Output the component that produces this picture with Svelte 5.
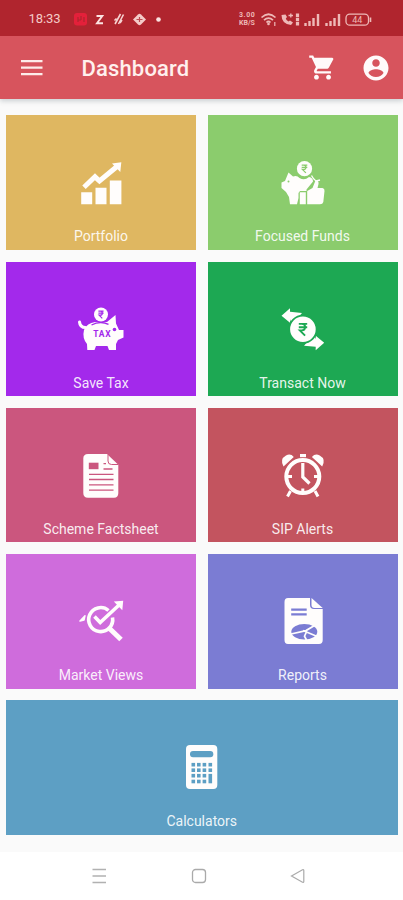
<script>
  const tiles = [
    { id: 'portfolio', label: 'Portfolio', color: '#dfb761' },
    { id: 'funds', label: 'Focused Funds', color: '#8bcc6d' },
    { id: 'tax', label: 'Save Tax', color: '#a329eb' },
    { id: 'transact', label: 'Transact Now', color: '#1da853' },
    { id: 'factsheet', label: 'Scheme Factsheet', color: '#cb567e' },
    { id: 'alerts', label: 'SIP Alerts', color: '#c3545f' },
    { id: 'market', label: 'Market Views', color: '#cf6cdc' },
    { id: 'reports', label: 'Reports', color: '#7b7cd3' },
    { id: 'calculators', label: 'Calculators', color: '#5d9fc4' }
  ];
  const keyRows = [19.7, 25.2, 30.7, 36.5];
  const keyCols = [16.3, 21.8, 27.4, 33.3];
</script>

{#snippet rupee(x, y, s)}
  <g transform="translate({x} {y}) scale({s})" fill="none" stroke="var(--tile)" stroke-width="1.8">
    <path d="M-4-5.2H4M-4-2H4M-3-5.2H-1C3-5.2 3 1 -1 1H-3L2 6" />
  </g>
{/snippet}

<div class="screen">
  <header>
    <div class="status">
      <span class="time">18:33</span>
      <svg class="notes" width="92" height="16" viewBox="0 0 92 16">
        <rect x="1" y="2" width="13" height="12.5" rx="3" fill="#e4203a" />
        <path d="M5 6v5M8 5v4M11 6v5M5 9h3" stroke="#b0252e" stroke-width="1.2" fill="none" />
        <path d="M23.500 5h5.800l-5.300 7.200h6" fill="none" stroke="#fbe3e1" stroke-width="1.900" />
        <path d="M42 13l5.500-10M45.500 13l5-9.500M41.500 9.500l2-2M47 12l2-3" stroke="#f6d3d1" stroke-width="1.600" fill="none" />
        <path d="M60 8.500L65 3.500Q66.500 2 68 3.500L73 8.500L68 13.500Q66.500 15 65 13.500Z" fill="#f4cbc8" />
        <path d="M63.500 8.500h6M66.500 6v5" stroke="#bd4a50" stroke-width="1.200" />
        <circle cx="85.500" cy="8.500" r="2.300" fill="#fbe3e1" />
      </svg>
      <span class="speed"><b>3.00</b><b>KB/S</b></span>
      <svg class="signals" width="115" height="16" viewBox="0 0 115 16" fill="none" stroke="#eeb9b7">
        <path d="M.500 6.500Q7.500 0 14.500 6.500M3 9.200Q7.500 5.200 12 9.200M5.500 11.500Q7.500 9.500 9.500 11.500" stroke-width="1.700" />
        <circle cx="7.500" cy="13" r="1.300" fill="#eeb9b7" stroke="none" />
        <path d="M13.800 11v4" stroke-width="1.200" />
        <path d="M20.500 4Q20.500 13 30 14L32 11.500L29 9.500L27.500 10.500Q25 9 24.800 7.500L26 6L24.500 3.500Z" fill="#eeb9b7" stroke="none" />
        <path d="M27.500 4.500h4.500M29.800 2.500v4" stroke-width="1.400" />
        <path d="M36.500 2.500v12.500" stroke-width="3.200" stroke-dasharray="3.500 .800" />
        <path d="M44.500 15v-3M48.500 15v-5M52.500 15V7M57 15V3M65.500 15v-3M69.500 15v-5M73.500 15V7M78 15V3" stroke-width="2.400" />
        <rect x="85" y="3.200" width="22.500" height="11" rx="3.800" stroke-width="1.300" />
        <path d="M109.500 6.500v4.500" stroke-width="1.600" />
        <text x="96.200" y="12" text-anchor="middle" font-size="9" fill="#eeb9b7" stroke="none">44</text>
      </svg>
    </div>
    <div class="bar">
      <svg class="menu" width="22" height="16" viewBox="0 0 22 16">
        <path d="M0 1.200h21.500M0 7.700h21.500M0 14.200h21.500" stroke="#fdecea" stroke-width="2.300" />
      </svg>
      <h1>Dashboard</h1>
      <svg class="cart" width="29" height="29" viewBox="0 0 24 24" fill="#fffafa">
        <path d="M7 18c-1.100 0-1.990.900-1.990 2S5.900 22 7 22s2-.900 2-2-.900-2-2-2zM1 2v2h2l3.600 7.590-1.350 2.450c-.160.280-.250.610-.250.960 0 1.100.900 2 2 2h12v-2H7.420c-.140 0-.250-.110-.250-.250l.030-.120.900-1.630h7.450c.750 0 1.410-.410 1.750-1.030l3.580-6.490A1 1 0 0 0 20 4H5.210l-.940-2H1zm16 16c-1.100 0-1.990.900-1.990 2s.890 2 1.990 2 2-.900 2-2-.900-2-2-2z" />
      </svg>
      <svg class="user" width="30" height="30" viewBox="0 0 24 24" fill="#fffafa">
        <path d="M12 2C6.480 2 2 6.480 2 12s4.480 10 10 10 10-4.480 10-10S17.520 2 12 2zm0 3c1.660 0 3 1.340 3 3s-1.340 3-3 3-3-1.340-3-3 1.340-3 3-3zm0 14.200c-2.500 0-4.710-1.280-6-3.220.030-1.990 4-3.080 6-3.080 1.990 0 5.970 1.090 6 3.080-1.290 1.940-3.500 3.220-6 3.220z" />
      </svg>
    </div>
  </header>

  <main>
    {#each tiles as t (t.id)}
      <div class="tile" class:wide={t.id === 'calculators'} style="--tile:{t.color}">
        <svg class="icon" width="50" height="50" viewBox="0 0 50 50" fill="#fffdfc">
          {#if t.id === 'portfolio'}
            <path d="M5.200 32.300h11v12H5.200zM19.500 27.700h11v16.600h-11zM33.800 20.500h11.600v23.800H33.800z" />
            <path d="M8 27.200L19 16.800L23.500 21L41 6.500" fill="none" stroke="#fffdfc" stroke-width="5" />
            <path d="M45.300 2.200L36 3.500L44.300 12Z" />
          {:else if t.id === 'funds'}
            <circle cx="26.500" cy="8.700" r="7.600" />
            {@render rupee(26.5, 8.7, 0.7)}
            <path d="M10.500 12.500L15 16.500Q19 15 21.500 18Q26.500 21 31 17Q35 17.500 35 21.500L28.500 29.500V31H22L20.500 33V38L19 44.300H12L11 37L8 32L3.500 28V22.500L7 21Z" />
            <path d="M33.500 15.500Q35.500 19.500 38 21L42 20" fill="none" stroke="#fffdfc" stroke-width="1.300" />
            <circle cx="10.500" cy="21.500" r="1" fill="var(--tile)" />
            <path d="M21.800 32.300h6v12h-6zM29.200 31L34.500 28L37.500 20.500Q41 20 40.500 24L39.500 28H44.500Q46.800 28.500 46.500 31L45.300 42Q44.800 44.300 42 44.300H29.200Z" />
          {:else if t.id === 'tax'}
            <path d="M3.500 15Q4 20.500 9.500 20.500" fill="none" stroke="#fffdfc" stroke-width="3" stroke-linecap="round" />
            <path d="M8 23Q11 16 19 15H31L39.500 8L40 16.500L43 23H47.500V30.500L42 33L40 37V42.900H33L31.500 39H20L18.500 42.900H11.300L11 37Q6 31 8 23Z" />
            <path d="M15.500 18Q24 13.500 32.500 17.300" fill="none" stroke="var(--tile)" stroke-width="1.400" />
            <circle cx="25" cy="7.500" r="7" />
            {@render rupee(25, 7.5, 0.65)}
            <circle cx="38.500" cy="22.500" r="1.800" fill="var(--tile)" />
            <text x="26" y="30" text-anchor="middle" font-size="8.500" font-weight="700" textLength="17.500" fill="var(--tile)">TAX</text>
          {:else if t.id === 'transact'}
            <path d="M3.500 8.700L12 1.300V4.800L24 6L14 17.500L12 12.300V15.700ZM46.200 35.800L37.700 43.200V39.700L26 38.800L36 27.500L37.700 32.200V28.800Z" />
            <circle cx="24.900" cy="22.300" r="13.700" stroke="var(--tile)" stroke-width="1.800" />
            {@render rupee(25, 22.3, 1.05)}
          {:else if t.id === 'factsheet'}
            <path d="M12 1H31L42.300 11.800V40Q42.300 44.700 38 44.700H12Q7.300 44.700 7.300 40V5.500Q7.300 1 12 1Z" />
            <path d="M32 1.500V8Q32 11.500 35.500 11.500H42" fill="none" stroke="var(--tile)" stroke-width="1" />
            <path d="M12.800 9.700h9.700v6.500h-9.700z" fill="var(--tile)" />
            <path d="M27.500 10.700h2.500M27.500 16h9M13 21.300h24.500M13 26.500h24.500M13 31.800h24.500M13 37.200h24.500" stroke="var(--tile)" stroke-width="1.300" />
          {:else if t.id === 'alerts'}
            <path d="M12.500 38L9.500 43.500M37 38L40 43.500" stroke="#fffdfc" stroke-width="3" />
            <circle cx="24.800" cy="23.600" r="16.500" fill="none" stroke="#fffdfc" stroke-width="4" />
            <path d="M5.500 13.500Q1.500 6 8 2.500Q12.500 0 15.800 4ZM44.200 13.500Q48.200 6 41.700 2.500Q37.200 0 33.900 4Z" />
            <path d="M22 1h6v3.200h-6z" />
            <path d="M24.800 10V24L31.500 30.500" fill="none" stroke="#fffdfc" stroke-width="3.200" />
            <path d="M10 23.600h4M36 23.600h4M24.800 35.500v3" stroke="#fffdfc" stroke-width="3" />
          {:else if t.id === 'market'}
            <path d="M4 22L9 16.700L8 21Z" stroke="#fffdfc" stroke-width="1.500" stroke-linejoin="round" />
            <path d="M32.500 11.500A12 12 0 1 0 36.500 18.500" fill="none" stroke="#fffdfc" stroke-width="3.600" />
            <path d="M33 29L45 40.500" stroke="#fffdfc" stroke-width="5" />
            <path d="M18.500 17.500L24.200 23.500L42.500 6.500" fill="none" stroke="#fffdfc" stroke-width="3.600" />
            <path d="M47.200 1.700L37.800 2.500L46.300 11.200Z" />
          {:else if t.id === 'reports'}
            <path d="M10-1H32V6Q32 10 36 10H44.700V41Q44.700 45 41 45H10Q6.500 45 6.500 41V3Q6.500-1 10-1Z" />
            <path d="M33.500-1L44.700 9H36.500Q33.500 9 33.500 6Z" />
            <path d="M13.200 10.600h15.500M13.200 15.300h15.500" stroke="var(--tile)" stroke-width="2.200" />
            <ellipse cx="26.300" cy="32.700" rx="13" ry="7.700" fill="var(--tile)" />
            <path d="M13 35L28 31.600L36.500 26.500M25 31.500L38 37M28.200 33.500L26.500 37.200L28.500 41" stroke="#fffdfc" stroke-width="1.700" fill="none" />
          {:else}
            <rect x="9" y="0" width="31.300" height="44" rx="4" />
            <rect x="13" y="6" width="23.300" height="6.300" rx="3" fill="var(--tile)" />
            {#each keyRows as y, r}
              {#each keyCols as x, c}
                {#if !(r === 3 && c === 3)}
                  <rect x={x - 1.8} y={y - 1.8} width="3.600" height={r === 2 && c === 3 ? 9.4 : 3.6} fill="var(--tile)" />
                {/if}
              {/each}
            {/each}
          {/if}
        </svg>
        <span class="label">{t.label}</span>
      </div>
    {/each}
  </main>

  <nav>
    <svg width="14" height="16" viewBox="0 0 14 16"><path d="M.500 1.500h13.500M.500 8h13.500M.500 14.500h13.500" stroke="#b1b1b1" stroke-width="1.300" /></svg>
    <svg width="16" height="16" viewBox="0 0 16 16"><rect x="1.500" y="1.500" width="13" height="13" rx="3" fill="none" stroke="#aaa" stroke-width="1.300" /></svg>
    <svg width="14" height="16" viewBox="0 0 14 16"><path d="M.500 8L11.500 1.700Q12.800 1.300 12.800 2.500V13.500Q12.800 14.700 11.500 14.300Z" fill="none" stroke="#aaa" stroke-width="1.200" /></svg>
  </nav>
</div>

<style>
  .screen {
    width: 403px;
    height: 900px;
    display: flex;
    flex-direction: column;
    overflow: hidden;
    background: #fafafa;
    font-family: Roboto, "Liberation Sans", sans-serif;
  }
  svg { display: block; flex: none; overflow: visible; }
  header { flex: none; box-shadow: 0 2px 5px rgba(60, 80, 90, 0.25); }
  .status {
    height: 36px;
    box-sizing: border-box;
    display: flex;
    align-items: center;
    padding: 1px 0 0 28.5px;
    background: #b0252e;
    color: #f4cbc8;
  }
  .time { width: 44.5px; font-size: 13px; letter-spacing: -0.1px; }
  .speed {
    display: flex;
    flex-direction: column;
    width: 22px;
    margin-left: 74px;
    font-size: 7px;
    line-height: 8px;
    color: #eeb9b7;
  }
  .speed b { height: 8px; }
  .speed b:first-child { letter-spacing: 0.6px; }
  .bar {
    height: 63px;
    box-sizing: border-box;
    display: flex;
    align-items: center;
    padding: 0 12px 0 21px;
    background: #d7545d;
  }
  h1 {
    margin: 0 0 0 38.5px;
    font-size: 22px;
    font-weight: 500;
    line-height: 30px;
    letter-spacing: 0.15px;
    color: #fff0ee;
    padding-top: 2px;
  }
  .cart { margin-left: auto; }
  .user { margin-left: 24px; }
  main {
    flex: 1;
    display: grid;
    grid-template-columns: 1fr 1fr;
    grid-auto-rows: 134.7px;
    gap: 11.5px;
    padding: 16.4px 5.5px 0 6px;
  }
  .tile {
    display: flex;
    flex-direction: column;
    align-items: center;
    background: var(--tile);
  }
  .wide { grid-column: span 2; }
  .icon { margin-top: 45px; }
  .label {
    margin-top: 18px;
    font-size: 14px;
    line-height: 17px;
    color: rgba(255, 255, 255, 0.9);
  }
  nav {
    flex: none;
    height: 48px;
    box-sizing: border-box;
    display: flex;
    justify-content: space-between;
    padding: 16px 98px 0 92px;
    background: #fff;
  }
</style>
